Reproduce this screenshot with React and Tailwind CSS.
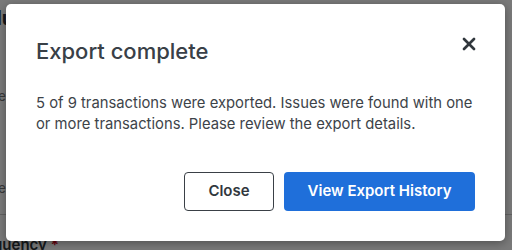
import React from 'react';
import { X } from 'lucide-react';

const BackgroundPage = () => (
  <div className="h-[250px] w-[512px] overflow-hidden bg-white text-[#2f353b]">
    <div className="-ml-[60px] flex flex-col">
      <div className="mt-[6px] text-[20px] font-bold leading-[24px]">Schedule</div>
      <div className="mt-[38px] text-[15px] font-bold leading-[18px]">Jobs</div>
      <div className="mt-[2px] text-[13px] leading-[16px] text-[#777]">Some note here</div>
      <div className="mt-[56px] text-[15px] font-bold leading-[18px]">Jobs</div>
      <div className="mt-[2px] text-[13px] leading-[16px] text-[#777]">Some note here</div>
      <div className="mt-[18px] border-t border-[#ccc]" />
    </div>
    <div className="mt-[21px] -ml-[30px] text-[15px] font-semibold leading-[18px]">
      Frequency <span className="text-[#d0021b]">*</span>
    </div>
  </div>
);

const ExportCompleteModal = () => (
  <div className="absolute left-[6px] top-[4px] w-[499px] rounded-[5px] bg-white py-[30px] pl-[30px] pr-[29px] shadow-[0_2px_10px_rgba(0,0,0,0.35)]">
    <div className="flex items-start justify-between">
      <h2 className="mt-[3px] text-[22px] leading-[28px] font-medium text-[#394047]">Export complete</h2>
      <button className="mr-[-3px] text-[#31373d]">
        <X size={20} strokeWidth={3.2} />
      </button>
    </div>
    <p className="mt-[28px] text-[14.8px] leading-[21px] text-[#3d4349]">
      5 of 9 transactions were exported. Issues were found with one or more transactions. Please review the export details.
    </p>
    <div className="mt-[37px] flex justify-end gap-[10px] pr-[1px]">
      <button className="h-[39px] w-[90px] rounded-[4px] border border-[#3a4046] text-[15px] font-semibold text-[#31373d]">
        Close
      </button>
      <button className="h-[39px] w-[191px] rounded-[4px] bg-[#1f6fda] text-[15px] font-semibold text-white">
        View Export History
      </button>
    </div>
  </div>
);

export default function App() {
  return (
    <div className="relative h-[250px] w-[512px] overflow-hidden font-['Inter',sans-serif]">
      <BackgroundPage />
      <div className="absolute inset-0 bg-[rgba(0,0,0,0.52)]" />
      <ExportCompleteModal />
    </div>
  );
}
